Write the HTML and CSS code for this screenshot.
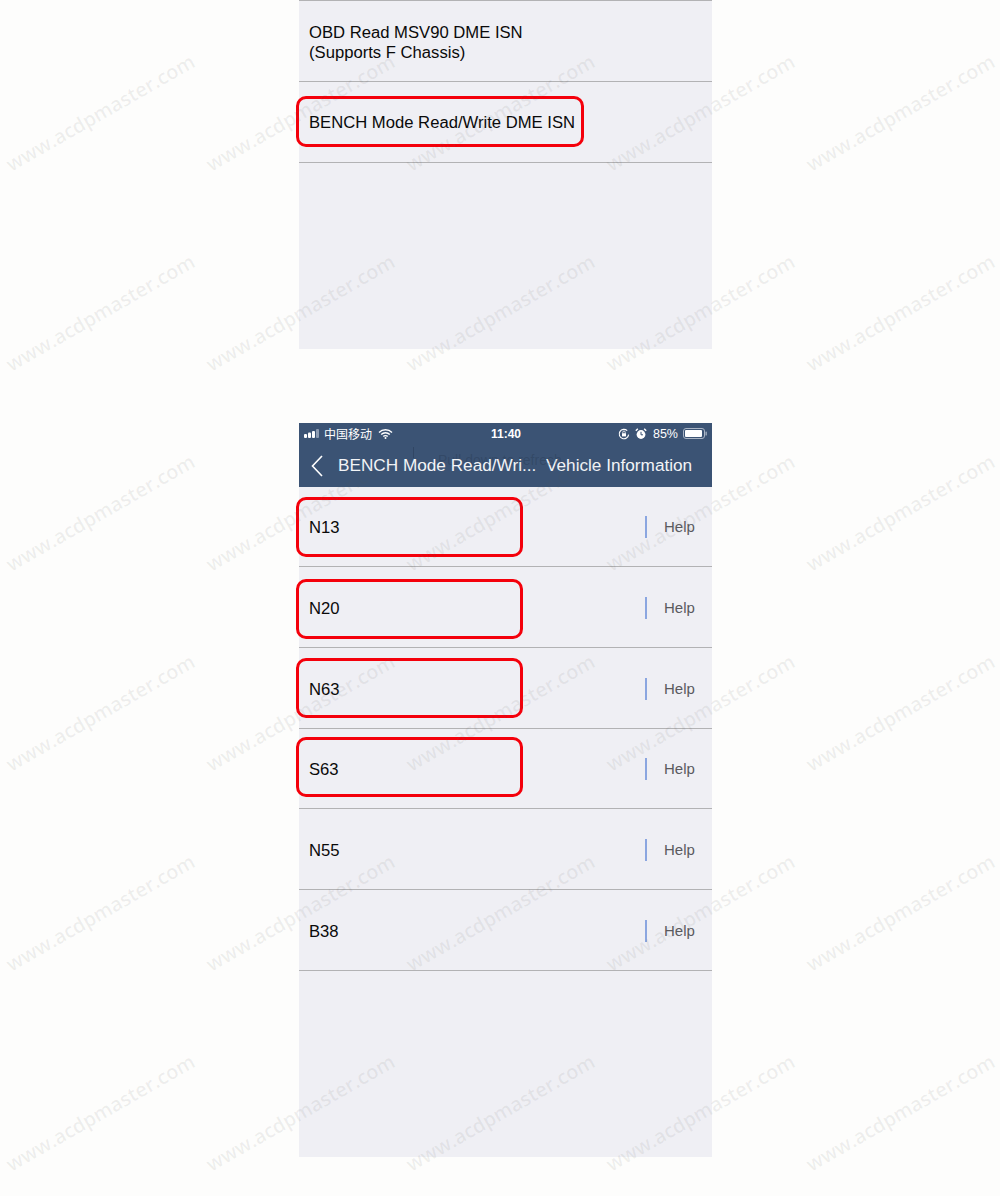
FILE: index.html
```html
<!DOCTYPE html>
<html>
<head>
    <title>BENCH Mode Read/Write DME ISN</title>
    <link rel="stylesheet" href="styles.css">
</head>
<body>
    <div class="page">
        <!-- first screenshot: function list -->
        <div class="screen screen-top">
            <div class="row row-first">
                <span class="row-name row-name-two">OBD Read MSV90 DME ISN<br>(Supports F Chassis)</span>
            </div>
            <div class="row row-first">
                <span class="row-name">BENCH Mode Read/Write DME ISN</span>
                <div class="mark mark-bench"></div>
            </div>
        </div>

        <!-- second screenshot: vehicle list -->
        <div class="screen screen-bottom">
            <div class="status-bar">
                <div class="status-left">
                    <svg class="signal" width="17" height="9" viewBox="0 0 17 9">
                        <rect x="0" y="5" width="3" height="4" rx="1" fill="#fff"/>
                        <rect x="4" y="3.5" width="3" height="5.5" rx="1" fill="#fff"/>
                        <rect x="8" y="2" width="3" height="7" rx="1" fill="#fff"/>
                        <rect x="12" y="0" width="3" height="9" rx="1" fill="#8d9cb2"/>
                    </svg>
                    <span class="carrier">中国移动</span>
                    <svg class="wifi" width="15" height="10" viewBox="0 0 15 10">
                        <path d="M1 3.4a9.2 9.2 0 0 1 13 0M3.2 5.6a6 6 0 0 1 8.6 0M5.3 7.6a3 3 0 0 1 4.4 0" fill="none" stroke="#fff" stroke-width="1.4"/>
                        <circle cx="7.5" cy="9" r="1" fill="#fff"/>
                    </svg>
                </div>
                <span class="clock">11:40</span>
                <div class="status-right">
                    <svg width="12" height="12" viewBox="0 0 12 12">
                        <path d="M10.6 6.6a4.7 4.7 0 1 1-1.4-3.9" fill="none" stroke="#fff" stroke-width="1.1"/>
                        <rect x="4" y="5.2" width="4" height="3.2" fill="#fff"/>
                        <path d="M4.8 5.2v-1a1.2 1.2 0 0 1 2.4 0v1" fill="none" stroke="#fff" stroke-width=".8"/>
                    </svg>
                    <svg class="alarm" width="12" height="12" viewBox="0 0 12 12">
                        <circle cx="6" cy="6.5" r="4.4" fill="#fff"/>
                        <path d="M6 3.8v3h2" fill="none" stroke="#3b5374" stroke-width="1"/>
                        <path d="M.8 2.8 2.8.8M11.2 2.8 9.2.8" stroke="#fff" stroke-width="1.4"/>
                    </svg>
                    <span class="battery-text">85%</span>
                    <svg width="24" height="11" viewBox="0 0 24 11">
                        <rect x=".5" y=".5" width="21" height="10" rx="2.5" fill="none" stroke="#aab5c5"/>
                        <rect x="2" y="2" width="17" height="7" rx="1" fill="#fff"/>
                        <rect x="22.5" y="3.5" width="1.3" height="4" rx=".6" fill="#aab5c5"/>
                    </svg>
                </div>
            </div>
            <div class="nav-bar">
                <svg class="back" width="12" height="22" viewBox="0 0 12 22">
                    <path d="M11 1 1.5 11 11 21" fill="none" stroke="#fff" stroke-width="1.6"/>
                </svg>
                <span class="ghost">Pull down to refresh</span>
                <span class="nav-back-title">BENCH Mode Read/Wri...</span>
                <span class="nav-title">Vehicle Information</span>
            </div>

            <div class="row row-start">
                <span class="row-name">N13</span>
                <span class="help">Help</span>
                <div class="mark mark-engine"></div>
            </div>
            <div class="row">
                <span class="row-name">N20</span>
                <span class="help">Help</span>
                <div class="mark mark-engine mark-n20"></div>
            </div>
            <div class="row">
                <span class="row-name">N63</span>
                <span class="help">Help</span>
                <div class="mark mark-engine"></div>
            </div>
            <div class="row row-short">
                <span class="row-name">S63</span>
                <span class="help">Help</span>
                <div class="mark mark-engine mark-s63"></div>
            </div>
            <div class="row">
                <span class="row-name">N55</span>
                <span class="help">Help</span>
            </div>
            <div class="row">
                <span class="row-name">B38</span>
                <span class="help">Help</span>
            </div>
        </div>

        <!-- site watermark over everything -->
        <div class="watermarks">
            <span>www.acdpmaster.com</span><span>www.acdpmaster.com</span><span>www.acdpmaster.com</span><span>www.acdpmaster.com</span><span>www.acdpmaster.com</span>
            <span>www.acdpmaster.com</span><span>www.acdpmaster.com</span><span>www.acdpmaster.com</span><span>www.acdpmaster.com</span><span>www.acdpmaster.com</span>
            <span>www.acdpmaster.com</span><span>www.acdpmaster.com</span><span>www.acdpmaster.com</span><span>www.acdpmaster.com</span><span>www.acdpmaster.com</span>
            <span>www.acdpmaster.com</span><span>www.acdpmaster.com</span><span>www.acdpmaster.com</span><span>www.acdpmaster.com</span><span>www.acdpmaster.com</span>
            <span>www.acdpmaster.com</span><span>www.acdpmaster.com</span><span>www.acdpmaster.com</span><span>www.acdpmaster.com</span><span>www.acdpmaster.com</span>
            <span>www.acdpmaster.com</span><span>www.acdpmaster.com</span><span>www.acdpmaster.com</span><span>www.acdpmaster.com</span><span>www.acdpmaster.com</span>
        </div>
    </div>
</body>
</html>
```

FILE: styles.css
```css
html, body {
    margin: 0;
    padding: 0;
}

body {
    background-color: #fdfdfc;
    font-family: "Liberation Sans", Arial, sans-serif;
    color: #111;
}

.page {
    position: relative;
    width: 1000px;
    height: 1196px;
    overflow: hidden;
    padding-left: 299px;
    box-sizing: border-box;
}

.screen {
    width: 413px;
    background-color: #efeff4;
}

.screen-top {
    height: 349px;
    margin-bottom: 74px;
    border-top: 1px solid #b2b2b4;
    box-sizing: border-box;
}

.screen-bottom {
    height: 734px;
}

/* list rows */
.row {
    position: relative;
    display: flex;
    align-items: center;
    justify-content: space-between;
    height: 79px;
    padding: 1px 17px 0 10px;
    border-bottom: 1px solid #b2b2b4;
}

.row-first {
    height: 80px;
    padding-top: 0;
}

.row-start {
    height: 79px;
    padding-top: 0;
}

.row-short {
    padding-top: 0;
}

.row-name {
    margin-top: 2px;
    font-size: 16.65px;
    line-height: 20px;
    color: #0a0a0a;
}

.row-name-two {
    margin-top: 4px;
}

.help {
    display: block;
    width: 31px;
    padding-left: 17px;
    font-size: 15px;
    line-height: 22px;
    color: #5a5a5e;
    border-left: 2px solid #8ba6e0;
}

/* red annotations */
.mark {
    position: absolute;
    box-sizing: border-box;
    border: 3px solid #f4000b;
    border-radius: 10px;
}

.mark-bench {
    left: -3px;
    top: 14px;
    width: 288px;
    height: 51px;
}

.mark-engine {
    left: -3px;
    top: 10px;
    width: 227px;
    height: 60px;
}

.mark-n20 {
    top: 12px;
}

.mark-s63 {
    top: 8px;
}

/* phone header */
.status-bar {
    position: relative;
    display: flex;
    align-items: center;
    justify-content: space-between;
    height: 21px;
    padding: 0 5px;
    background-color: #3b5374;
    color: #fff;
    font-size: 12.5px;
}

.status-left,
.status-right {
    display: flex;
    align-items: center;
}

.carrier {
    margin: 0 6px 0 3px;
    font-family: "Noto Sans CJK SC", sans-serif;
    font-size: 12px;
}

.alarm {
    margin-left: 5px;
}

.battery-text {
    margin: 0 5px 0 6px;
}

.clock {
    position: absolute;
    left: 192px;
    font-weight: bold;
    font-size: 12px;
}

.nav-bar {
    position: relative;
    display: flex;
    align-items: center;
    height: 43px;
    padding-left: 12px;
    background-color: #3b5374;
    color: #f2f4f7;
    white-space: nowrap;
}

.back {
    margin-right: 15px;
}

.nav-back-title {
    position: relative;
    width: 208px;
    font-size: 17.2px;
}

.nav-title {
    font-size: 17.2px;
}

/* page behind the nav bar showing through */
.ghost {
    position: absolute;
    left: 139px;
    top: 8px;
    font-size: 14px;
    color: rgba(20, 30, 50, 0.2);
}

.ghost::before {
    content: "";
    position: absolute;
    left: -25px;
    top: -5px;
    width: 1px;
    height: 11px;
    background-color: rgba(20, 30, 50, 0.25);
}

/* watermark grid */
.watermarks {
    position: absolute;
    left: 0;
    top: 12px;
    display: grid;
    grid-template-columns: repeat(5, 200px);
    grid-auto-rows: 200px;
    pointer-events: none;
}

.watermarks span {
    display: flex;
    align-items: center;
    justify-content: center;
    font-family: "Open Sans", sans-serif;
    font-size: 19.8px;
    font-weight: 600;
    white-space: nowrap;
    color: rgba(90, 90, 90, 0.09);
    transform: rotate(-29.8deg);
}
```
